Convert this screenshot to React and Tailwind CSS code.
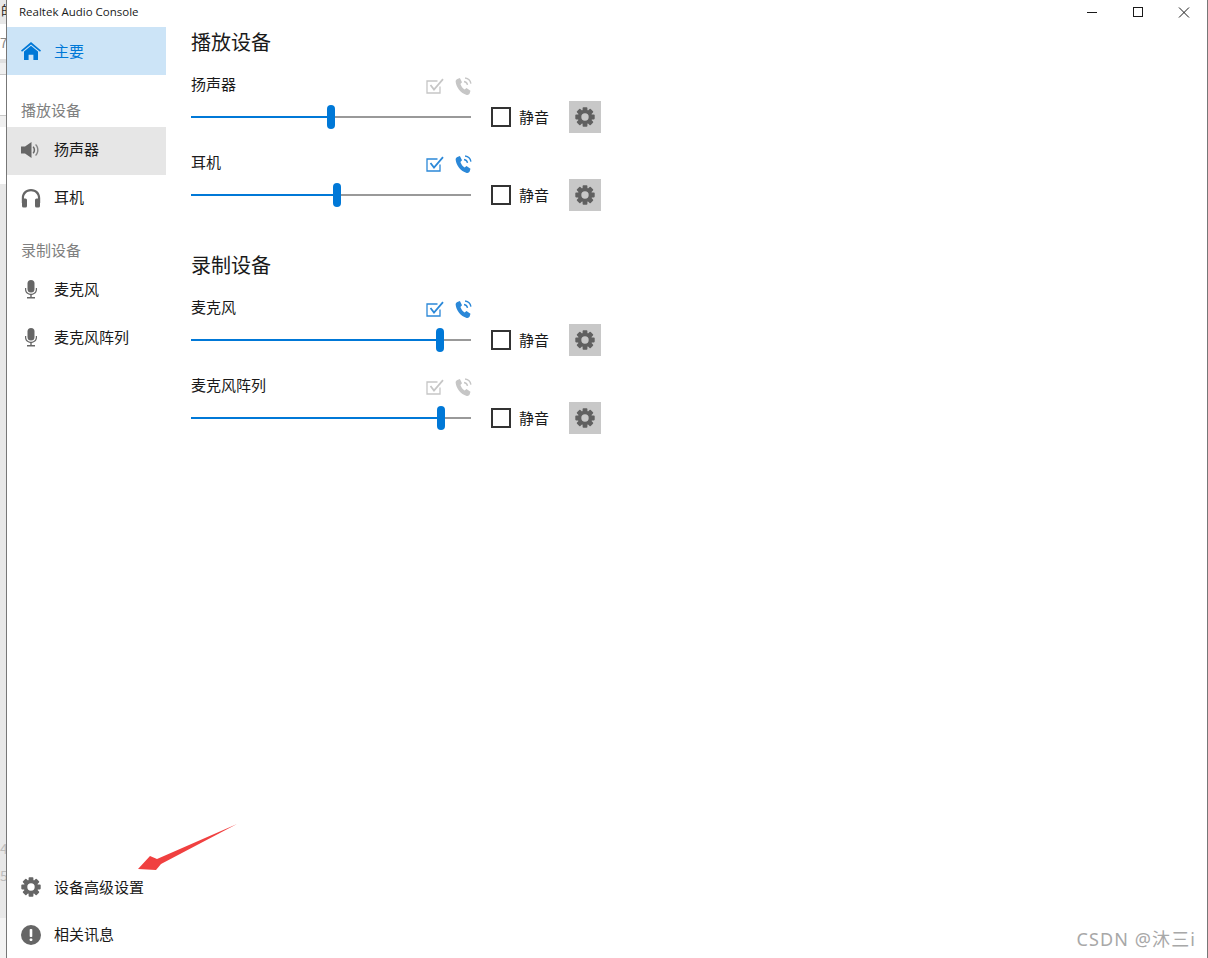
function Gear({ size = 20, color = "#666666" }) {
  const teeth = [0, 45, 90, 135, 180, 225, 270, 315];
  return (
    <svg width={size} height={size} viewBox="0 0 20 20" fill={color}>
      {teeth.map((a) => (
        <rect key={a} x="7.6" y="0.3" width="4.8" height="4.5" rx="0.8" transform={`rotate(${a} 10 10)`} />
      ))}
      <path fillRule="evenodd" d="M10 2.8a7.2 7.2 0 1 1 0 14.4a7.2 7.2 0 0 1 0-14.4zM10 6.3a3.7 3.7 0 1 0 0 7.4a3.7 3.7 0 0 0 0-7.4z" />
    </svg>
  );
}

function HomeIcon() {
  return (
    <svg width="20" height="18" viewBox="0 0 20 18" fill="#0078d7">
      <path d="M10 0L0 8.6l1 1.1L10 2.4l9 7.3 1-1.1z" />
      <path fillRule="evenodd" d="M10 3.8l7 5.7V18h-4.600v-5.200H7.600V18H3V9.500z" />
    </svg>
  );
}

function SpeakerIcon() {
  return (
    <svg width="20" height="18" viewBox="0 0 20 18" fill="#666666">
      <path d="M0 5.600h4L10.500 1v16L4 12.400H0z" />
      <path d="M12.500 5.200c2.200 1.800 2.200 5.800 0 7.600l-.9-1c1.400-1.400 1.400-4.200 0-5.600z" />
      <path d="M15 3c3.400 3 3.400 9 0 12l-.9-1c2.700-2.500 2.700-7.500 0-10z" opacity="0.75" />
    </svg>
  );
}

function HeadphoneIcon() {
  return (
    <svg width="20" height="20" viewBox="0 0 20 20" fill="#666666">
      <path d="M10 1C4.500 1 .8 4.800.8 10v5h2.200v-5c0-4 3-6.800 7-6.800s7 2.800 7 6.800v5h2.200v-5C19.200 4.800 15.500 1 10 1z" />
      <rect x="1" y="10.500" width="5" height="9" rx="1.500" />
      <rect x="14" y="10.500" width="5" height="9" rx="1.500" />
    </svg>
  );
}

function MicIcon() {
  return (
    <svg width="14" height="19" viewBox="0 0 14 19" fill="#666666">
      <rect x="3.500" y="0" width="7" height="12.500" rx="3.500" />
      <path d="M1 8h1.200v1.500c0 2.500 2.100 4.200 4.800 4.200s4.800-1.700 4.800-4.200V8H13v1.500c0 3-2.300 5.100-5.300 5.400V17h3.300v1.400H3V17h3.300v-2.100C3.300 14.600 1 12.500 1 9.500z" />
    </svg>
  );
}

function InfoIcon() {
  return (
    <svg width="20" height="20" viewBox="0 0 20 20">
      <circle cx="10" cy="10" r="10" fill="#666666" />
      <rect x="8.700" y="4" width="2.600" height="8" rx="0.800" fill="#ffffff" />
      <rect x="8.700" y="13.500" width="2.600" height="2.600" rx="0.800" fill="#ffffff" />
    </svg>
  );
}

function CheckBoxIcon({ color }) {
  return (
    <svg width="18" height="16" viewBox="0 0 18 16" fill="none" stroke={color}>
      <path d="M14 8.500v6.500H1V3h10.500" strokeWidth="1.300" />
      <path d="M4.500 7l3.500 4.500L17 1.200" strokeWidth="1.800" />
    </svg>
  );
}

function PhoneIcon({ color }) {
  return (
    <svg width="17" height="18" viewBox="0 0 16 17">
      <path fill={color} d="M2.200 1.800L4.600 1l2 4-1.500 1.500c.6 2 2.200 4.200 4 5.300l1.700-1.300 3.800 2.500-.8 2.700c-.4 1-1.600 1.500-2.800 1.200C5.300 15.200 1 9.300.6 4.400.5 3.200 1.100 2.200 2.200 1.800z" />
      <path fill="none" stroke={color} strokeWidth="1.300" d="M8.500 4.200c1.800.3 3 1.500 3.300 3.300" />
      <path fill="none" stroke={color} strokeWidth="1.300" d="M9.500.9c3 .4 5 2.400 5.500 5.400" />
    </svg>
  );
}

function NavItem({ icon, label, active, selected, labelClass = "", iconClass = "" }) {
  const bg = active ? "bg-[#cce4f7]" : selected ? "bg-[#e6e6e6]" : "";
  const text = active ? "text-[#0078d7]" : "text-[#1a1a1a]";
  return (
    <div className={`flex h-12 items-center ${bg}`}>
      <div className={`flex w-[47px] justify-center pl-[1px] ${iconClass}`}>{icon}</div>
      <span className={`text-[15px] ${text} ${labelClass}`}>{label}</span>
    </div>
  );
}

function SectionLabel({ children, className }) {
  return <div className={`pl-[14px] text-[15px] leading-5 text-[#808080] ${className}`}>{children}</div>;
}

function Device({ name, value, on, className }) {
  const iconColor = on ? "#2b88d8" : "#c6c6c6";
  return (
    <div className={`w-[410px] ${className}`}>
      <div className="flex h-5 w-[281px] justify-between">
        <span className="text-[15px] leading-5 text-[#1a1a1a]">{name}</span>
        <div className="flex items-center gap-[11px] pt-[3px]">
          <CheckBoxIcon color={iconColor} />
          <PhoneIcon color={iconColor} />
        </div>
      </div>
      <div className="mt-[7px] flex h-8 items-center">
        <div className="relative h-[2px] w-[280px] bg-[#999999]">
          <div className="h-full bg-[#0078d7]" style={{ width: value }} />
          <div
            className="absolute top-[-11px] h-6 w-2 -translate-x-1/2 rounded-full bg-[#0078d7]"
            style={{ left: value }}
          />
        </div>
        <div className="ml-5 h-5 w-5 border-2 border-[#333333]" />
        <span className="ml-2 text-[15px] text-[#1a1a1a]">静音</span>
        <div className="ml-5 flex h-8 w-8 items-center justify-center bg-[#c8c8c8]">
          <Gear size={20} color="#606060" />
        </div>
      </div>
    </div>
  );
}

function Strip() {
  return (
    <div className="flex h-full w-[6px] shrink-0 flex-col overflow-hidden bg-[#e8e8e8] text-[13px] leading-none text-[#666666]">
      <div className="h-6 shrink-0 bg-[#e8e8e8] pl-[1px] pt-[3px] text-[#222222]">的</div>
      <div className="h-[35px] shrink-0 bg-white pt-3 text-[#888888]">7</div>
      <div className="h-[15px] shrink-0 border-t-4 border-t-[#e0e0e0] bg-[#f0f0f0]" />
      <div className="h-[41px] shrink-0 border-t border-t-[#c8c8c8] bg-white" />
      <div className="h-3 shrink-0 border-t border-t-[#c8c8c8] bg-[#f0f0f0]" />
      <div className="h-[57px] shrink-0 bg-white" />
      <div className="h-[734px] shrink-0 bg-[#e8e8e8] pt-[651px] text-[14px] leading-[27px] text-[#bdbdbd]">
        <div>4</div>
        <div>5</div>
      </div>
      <div className="flex-1 bg-[#f3f3f3]" />
    </div>
  );
}

export default function App() {
  return (
    <div
      className="relative flex h-[958px] w-[1208px] overflow-hidden bg-white"
      style={{ fontFamily: '"Noto Sans CJK SC", "Noto Sans", sans-serif' }}
    >
      <Strip />
      <div className="flex h-full flex-1 flex-col border-x border-x-[#777777]">
        <div className="flex h-[27px] shrink-0 items-center justify-between">
          <span className="pb-1 pl-3 text-[11.5px] text-[#1a1a1a]" style={{ fontFamily: '"Open Sans", "Noto Sans", sans-serif' }}>
            Realtek Audio Console
          </span>
          <div className="flex items-center pb-[3px]">
            <svg width="46" height="11" viewBox="0 0 46 11" stroke="#1a1a1a" fill="none">
              <path d="M18 5.500h10" />
            </svg>
            <svg width="46" height="11" viewBox="0 0 46 11" stroke="#1a1a1a" fill="none">
              <rect x="18.500" y="0.500" width="9" height="9" strokeWidth="1" />
            </svg>
            <svg width="46" height="11" viewBox="0 0 46 11" stroke="#1a1a1a" fill="none">
              <path d="M18 .5l10 10M28 .5l-10 10" />
            </svg>
          </div>
        </div>
        <div className="flex min-h-0 flex-1">
          <nav className="flex w-[159px] shrink-0 flex-col">
            <NavItem active icon={<HomeIcon />} label="主要" />
            <SectionLabel className="mt-[25px] mb-[7px]">播放设备</SectionLabel>
            <NavItem selected icon={<SpeakerIcon />} label="扬声器" labelClass="pb-1" iconClass="pb-[2px]" />
            <NavItem icon={<HeadphoneIcon />} label="耳机" labelClass="pb-1" iconClass="pb-[2px]" />
            <SectionLabel className="mt-[17px] mb-[5px]">录制设备</SectionLabel>
            <NavItem icon={<MicIcon />} label="麦克风" />
            <NavItem icon={<MicIcon />} label="麦克风阵列" />
            <div className="mt-auto">
              <NavItem icon={<Gear size={20} />} label="设备高级设置" labelClass="pt-[2px]" iconClass="pt-[2px]" />
              <NavItem icon={<InfoIcon />} label="相关讯息" labelClass="pt-[1px]" iconClass="pt-[2px]" />
            </div>
          </nav>
          <main className="flex-1 pl-[25px]">
            <h2 className="text-[20px] leading-[30px] text-[#1a1a1a]">播放设备</h2>
            <Device className="mt-[17px]" name="扬声器" value={140} />
            <Device className="mt-[19px]" name="耳机" value={146} on />
            <h2 className="mt-[39px] text-[20px] leading-[30px] text-[#1a1a1a]">录制设备</h2>
            <Device className="mt-[17px]" name="麦克风" value={249} on />
            <Device className="mt-[19px]" name="麦克风阵列" value={250} />
          </main>
        </div>
      </div>
      <svg className="absolute left-[137px] top-[823px]" width="102" height="50" viewBox="0 0 102 50">
        <path fill="#f04040" d="M100 1L20 36 13 33 1 46 19 47 24 41z" />
      </svg>
      <div
        className="absolute right-[12px] top-[927px] text-[18px] leading-6 tracking-[1.1px] text-[#a8a8a8]"
        style={{ fontFamily: '"Noto Sans", "Noto Sans CJK SC", sans-serif' }}
      >
        CSDN @沐三i
      </div>
    </div>
  );
}
